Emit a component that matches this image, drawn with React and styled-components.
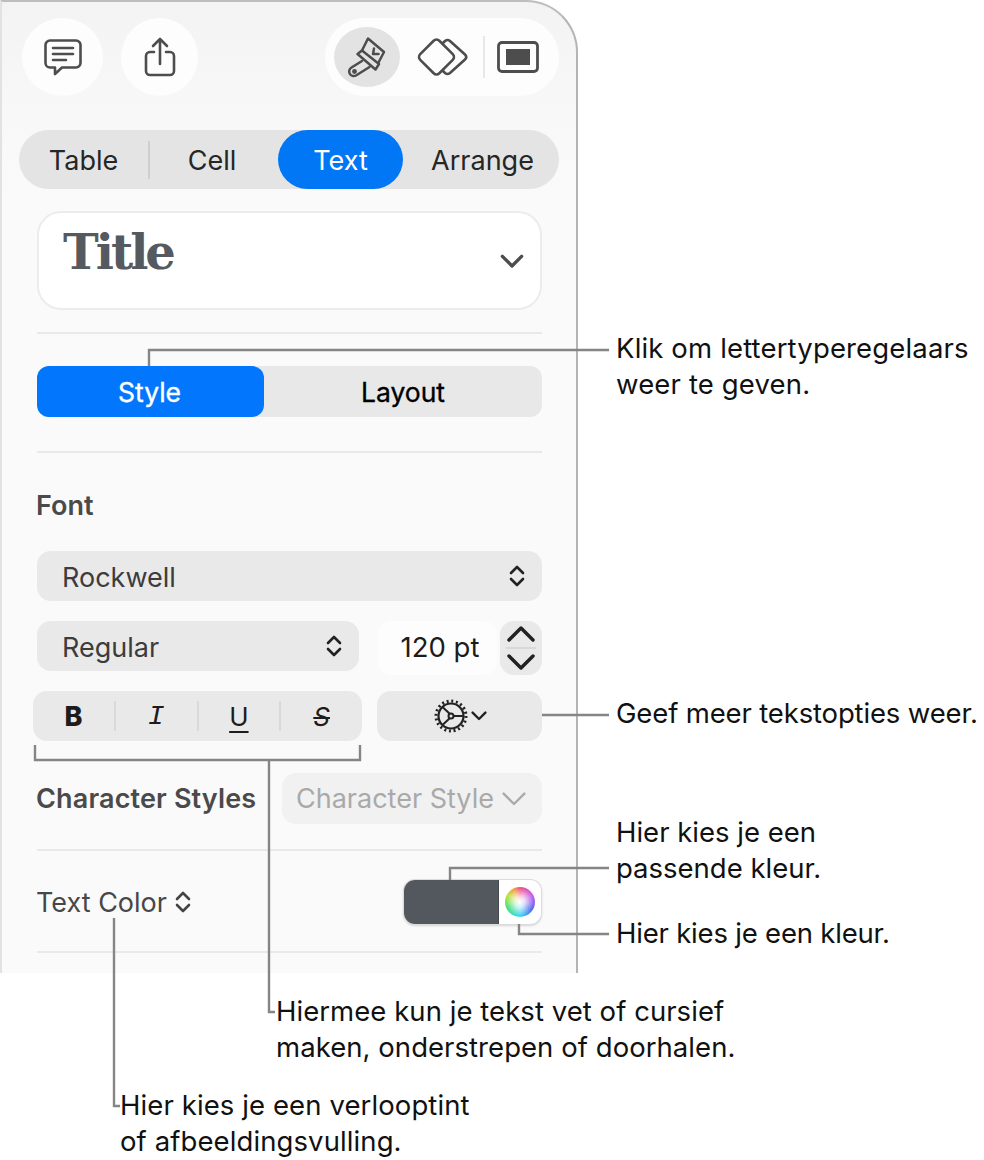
import React from "react";
import styled, { createGlobalStyle } from "styled-components";

const GlobalStyle = createGlobalStyle`
  body {
    margin: 0;
    background: #fff;
    font-family: Inter, "Noto Sans", sans-serif;
  }
`;

const Page = styled.div`
  position: relative;
  width: 984px;
  height: 1160px;
  overflow: hidden;
`;

const Panel = styled.div`
  box-sizing: border-box;
  width: 578px;
  height: 973px;
  padding-top: 16px;
  background: linear-gradient(180deg, #f3f3f3 0, #f8f8f8 110px, #fafafa 200px);
  border-top: 2px solid #bdbdbd;
  border-right: 2px solid #b4b4b4;
  border-left: 2px solid #e2e2e2;
  border-top-right-radius: 52px;
  overflow: hidden;
`;

const Toolbar = styled.div`
  display: flex;
  align-items: center;
  margin: 0 17px 0 20px;
  height: 78px;
`;

const RoundButton = styled.div`
  display: flex;
  align-items: center;
  justify-content: center;
  width: ${(p) => p.$w}px;
  height: 78px;
  margin-right: 18px;
  border-radius: 50%;
  background: #fdfdfd;
`;

const ViewGroup = styled.div`
  display: flex;
  align-items: center;
  margin-left: auto;
  width: 234px;
  height: 78px;
  padding-left: 9px;
  box-sizing: border-box;
  border-radius: 39px;
  background: #fdfdfd;
`;

const ViewActive = styled.div`
  width: 66px;
  height: 60px;
  line-height: 0;
  border-radius: 50%;
  background: #e3e3e3;
`;

const ViewIcon = styled.div`
  display: flex;
  align-items: center;
  justify-content: center;
  width: ${(p) => p.$w}px;
`;

const ViewDivider = styled.div`
  width: 2px;
  height: 42px;
  background: #e8e8e8;
`;

const Tabs = styled.div`
  display: flex;
  align-items: center;
  margin: 34px 17px 0 17px;
  height: 59px;
  border-radius: 30px;
  background: #e4e4e4;
`;

const Tab = styled.div`
  box-sizing: border-box;
  display: flex;
  align-items: center;
  justify-content: center;
  width: ${(p) => p.$w}px;
  height: 59px;
  padding: 2px ${(p) => p.$right || 0}px 0 ${(p) => p.$left || 0}px;
  border-radius: 30px;
  font-size: 27px;
  color: ${(p) => (p.$active ? "#fff" : "#262626")};
  background: ${(p) => (p.$active ? "#0277f5" : "transparent")};
`;

const TabDivider = styled.div`
  width: 2px;
  height: 38px;
  background: #cfcfcf;
`;

const Body = styled.div`
  margin: 22px 34px 0 35px;
`;

const TitleBox = styled.div`
  box-sizing: border-box;
  display: flex;
  justify-content: space-between;
  height: 99px;
  padding: 8px 16px 0 24px;
  border: 2px solid #ececec;
  border-radius: 24px;
  background: #fff;
`;

const TitleText = styled.div`
  font-family: "DejaVu Serif", serif;
  font-weight: 700;
  font-size: 48px;
  letter-spacing: -3px;
  line-height: 62px;
  color: #555a61;
`;

const TitleChevron = styled.div`
  align-self: center;
  margin-top: -6px;
  line-height: 0;
`;

const Divider = styled.div`
  height: 2px;
  margin-top: ${(p) => p.$top}px;
  background: #e9e9e9;
`;

const Segmented = styled.div`
  display: flex;
  height: 51px;
  margin-top: 32px;
  border-radius: 12px;
  background: #e8e8e8;
`;

const Segment = styled.div`
  box-sizing: border-box;
  display: flex;
  align-items: center;
  justify-content: center;
  flex: ${(p) => (p.$active ? "0 0 227px" : "1")};
  padding-right: ${(p) => (p.$active ? 2 : 0)}px;
  border-radius: 12px;
  font-size: 26.5px;
  font-weight: 400;
  -webkit-text-stroke: 0.35px currentColor;
  color: ${(p) => (p.$active ? "#fff" : "#000")};
  background: ${(p) => (p.$active ? "#0277fd" : "transparent")};
`;

const SectionLabel = styled.div`
  margin: 38px 0 0 -1px;
  font-size: 27px;
  font-weight: 600;
  line-height: 30px;
  color: #4a4a4a;
`;

const Select = styled.div`
  box-sizing: border-box;
  display: flex;
  align-items: center;
  justify-content: space-between;
  width: ${(p) => (p.$w ? `${p.$w}px` : "auto")};
  height: 50px;
  margin-top: ${(p) => p.$top || 0}px;
  padding: 0 17px 0 25px;
  border-radius: 14px;
  font-size: 27px;
  color: #3c3c3c;
  background: #e9e9e9;
`;

const SelectText = styled.span`
  padding-top: 2px;
`;

const SizeRow = styled.div`
  display: flex;
  height: 50px;
  margin-top: 20px;
`;

const SizeField = styled.div`
  box-sizing: border-box;
  display: flex;
  align-items: center;
  justify-content: center;
  width: 119px;
  height: 54px;
  margin-left: 19px;
  padding: 0 0 3px 5px;
  border-radius: 14px;
  font-size: 27.5px;
  color: #1c1c1c;
  background: #fdfdfd;
`;

const Stepper = styled.div`
  display: flex;
  flex-direction: column;
  align-items: center;
  justify-content: center;
  gap: 4px;
  width: 42px;
  height: 54px;
  margin-left: 3px;
  border-radius: 14px;
  background: #e9e9e9;
`;

const StepperLine = styled.div`
  width: 30px;
  height: 2px;
  background: #d8d8d8;
`;

const FormatRow = styled.div`
  display: flex;
  justify-content: space-between;
  margin: 20px 0 0 -4px;
`;

const FormatGroup = styled.div`
  display: flex;
  align-items: center;
  width: 329px;
  height: 50px;
  border-radius: 14px;
  background: #e9e9e9;
`;

const FormatButton = styled.div`
  flex: 1;
  text-align: center;
  font-size: ${(p) => p.$size || 26}px;
  color: #1c1c1c;
  font-weight: ${(p) => (p.$bold ? 800 : 400)};
  font-family: ${(p) => (p.$mono ? '"Liberation Mono", monospace' : "inherit")};
  font-style: ${(p) => (p.$italic ? "italic" : "normal")};
  text-decoration: ${(p) => p.$deco || "none"};
  text-decoration-thickness: 2px;
  text-underline-offset: 5px;
`;

const FormatDivider = styled.div`
  width: 2px;
  height: 30px;
  background: #d9d9d9;
`;

const GearButton = styled.div`
  display: flex;
  align-items: center;
  justify-content: center;
  gap: 2px;
  width: 165px;
  height: 50px;
  border-radius: 14px;
  background: #e9e9e9;
`;

const StylesRow = styled.div`
  display: flex;
  align-items: center;
  justify-content: space-between;
  margin-top: 32px;
`;

const StylesLabel = styled.div`
  margin-left: -1px;
  font-size: 27px;
  font-weight: 600;
  letter-spacing: 0.15px;
  white-space: nowrap;
  color: #4a4a4a;
`;

const StyleSelect = styled.div`
  box-sizing: border-box;
  display: flex;
  align-items: center;
  justify-content: space-between;
  width: 260px;
  height: 51px;
  padding: 0 15px 0 14px;
  border-radius: 14px;
  font-size: 27px;
  white-space: nowrap;
  color: #a9a9a9;
  background: #f1f1f1;
`;

const ColorRow = styled.div`
  display: flex;
  align-items: center;
  justify-content: space-between;
  height: 44px;
  margin-top: 29px;
`;

const ColorLabel = styled.div`
  display: flex;
  align-items: center;
  gap: 8px;
  margin-left: -1px;
  font-size: 27px;
  color: #474747;
`;

const ColorWell = styled.div`
  display: flex;
  width: 137px;
  height: 44px;
  margin-right: 1px;
  border-radius: 11px;
  overflow: hidden;
  background: #fff;
  box-shadow: 0 0 0 1px #dcdcdc, 0 1px 3px rgba(0, 0, 0, 0.3);
`;

const ColorSwatch = styled.div`
  width: 94px;
  background: #53575e;
  border-right: 1px solid #474a50;
`;

const WheelCell = styled.div`
  flex: 1;
  display: flex;
  align-items: center;
  justify-content: center;
`;

const Wheel = styled.div`
  width: 30px;
  height: 30px;
  border-radius: 50%;
  background:
    radial-gradient(circle closest-side, #fff 0, rgba(255, 255, 255, 0.75) 35%, rgba(255, 255, 255, 0) 92%),
    conic-gradient(#f2508c, #c85fe6 60deg, #4f6df5 125deg, #3fd8f0 180deg, #45e07a 245deg, #c4e040 300deg, #f5a040 335deg, #f2508c);
`;

const Leaders = styled.svg`
  position: absolute;
  left: 0;
  top: 0;
  pointer-events: none;
`;

const Note = styled.div`
  position: absolute;
  left: ${(p) => p.$x}px;
  top: ${(p) => p.$y}px;
  font-size: 27.5px;
  letter-spacing: ${(p) => p.$ls || 0}px;
  line-height: 35.5px;
  white-space: nowrap;
  color: #111;
`;

const UpDown = ({ color = "#222" }) => (
  <svg width="16" height="24" viewBox="0 0 16 24" fill="none" stroke={color} strokeWidth="2.6" strokeLinecap="round" strokeLinejoin="round">
    <path d="M2 9l6-6 6 6" />
    <path d="M2 15l6 6 6-6" />
  </svg>
);

const CommentIcon = () => (
  <svg width="38" height="37" viewBox="0 0 38 37" fill="none" stroke="#4d4d4d" strokeWidth="2.6" strokeLinecap="round" strokeLinejoin="round">
    <path d="M6 1.5h26a4.5 4.5 0 0 1 4.5 4.5v18a4.5 4.5 0 0 1-4.5 4.5H18l-7 6.5v-6.5H6A4.5 4.5 0 0 1 1.5 24V6A4.5 4.5 0 0 1 6 1.5z" />
    <path d="M9 9h20M9 15h20M9 21h13" />
  </svg>
);

const ShareIcon = () => (
  <svg width="32" height="40" viewBox="0 0 32 40" fill="none" stroke="#4d4d4d" strokeWidth="2.6" strokeLinecap="round" strokeLinejoin="round">
    <path d="M16 2v25M9 9l7-7 7 7" />
    <path d="M10 15H6a4 4 0 0 0-4 4v15a4 4 0 0 0 4 4h20a4 4 0 0 0 4-4V19a4 4 0 0 0-4-4h-4" />
  </svg>
);

const BrushIcon = () => (
  <svg width="66" height="60" viewBox="-0.5 -3 66 60" fill="none" stroke="#4d4d4d" strokeWidth="2.5" strokeLinecap="round" strokeLinejoin="round">
    <path d="M27.500 20.500L33.500 8.500L49.500 22L44 32.500" />
    <path d="M39.500 18.500L38.500 24L44 24" />
    <path d="M23 24l4.500-3.500 17 13.500-3.500 5.500z" />
    <path d="M27.500 31L17 37.500a4.500 4.500 0 0 0 4.500 8L35 37" />
    <circle cx="20" cy="41.500" r="1.200" fill="#4d4d4d" />
  </svg>
);

const DiamondsIcon = () => (
  <svg width="52" height="40" viewBox="0 0 52 40" fill="none" stroke="#4d4d4d" strokeWidth="2.6" strokeLinejoin="round" strokeLinecap="round">
    <rect x="7" y="6.500" width="27" height="27" rx="4" transform="rotate(45 20.500 20)" />
    <path d="M27 6l2-2q2.500-2 5 0l15 13.500q2.500 2.500 0 5L34 36q-2.500 2-5 0l-2-2" />
  </svg>
);

const SlideIcon = () => (
  <svg width="42" height="32" viewBox="0 0 42 32" fill="none">
    <rect x="1.500" y="1.500" width="39" height="29" rx="3.500" stroke="#4d4d4d" strokeWidth="2.8" />
    <rect x="9" y="8" width="24" height="16" fill="#4d4d4d" />
  </svg>
);

const Chevron = ({ size = 24, width = 2.8, color = "#4d4d4d", up = false }) => (
  <svg width={size} height={size * 0.6} viewBox="0 0 20 12" fill="none" stroke={color} strokeWidth={width} strokeLinecap="round" strokeLinejoin="round">
    <path d={up ? "M2 10l8-8 8 8" : "M2 2l8 8 8-8"} />
  </svg>
);

const GearIcon = () => (
  <svg width="36" height="36" viewBox="0 0 36 36" fill="none" stroke="#222">
    <circle cx="18" cy="18" r="12.500" strokeWidth="2.2" />
    <circle cx="18" cy="18" r="15" strokeWidth="3" strokeDasharray="2 2.700" />
    <circle cx="18" cy="18" r="2.500" strokeWidth="2" />
    <path d="M20.500 18H30M16.700 15.800L10 9.500M16.700 20.200L10 26.500" strokeWidth="2" />
  </svg>
);

export default function App() {
  return (
    <Page>
      <GlobalStyle />
      <Panel>
        <Toolbar>
          <RoundButton $w={81}><CommentIcon /></RoundButton>
          <RoundButton $w={77}><ShareIcon /></RoundButton>
          <ViewGroup>
            <ViewActive><BrushIcon /></ViewActive>
            <ViewIcon $w={83}><DiamondsIcon /></ViewIcon>
            <ViewDivider />
            <ViewIcon $w={66}><SlideIcon /></ViewIcon>
          </ViewGroup>
        </Toolbar>

        <Tabs>
          <Tab $w={129}>Table</Tab>
          <TabDivider />
          <Tab $w={128} $right={4}>Cell</Tab>
          <Tab $w={125} $active>Text</Tab>
          <Tab $w={156} $left={3}>Arrange</Tab>
        </Tabs>

        <Body>
          <TitleBox>
            <TitleText>Title</TitleText>
            <TitleChevron><Chevron /></TitleChevron>
          </TitleBox>
          <Divider $top={22} />

          <Segmented>
            <Segment $active>Style</Segment>
            <Segment>Layout</Segment>
          </Segmented>
          <Divider $top={34} />

          <SectionLabel>Font</SectionLabel>
          <Select $top={30}>
            <SelectText>Rockwell</SelectText>
            <UpDown />
          </Select>

          <SizeRow>
            <Select $w={322}>
              <SelectText>Regular</SelectText>
              <UpDown />
            </Select>
            <SizeField>120 pt</SizeField>
            <Stepper>
              <Chevron size={30} width={2.3} color="#222" up />
              <StepperLine />
              <Chevron size={30} width={2.3} color="#222" />
            </Stepper>
          </SizeRow>

          <FormatRow>
            <FormatGroup>
              <FormatButton $bold $size={27}>B</FormatButton>
              <FormatDivider />
              <FormatButton $mono $italic $size={28}>I</FormatButton>
              <FormatDivider />
              <FormatButton $deco="underline">U</FormatButton>
              <FormatDivider />
              <FormatButton $italic $deco="line-through">S</FormatButton>
            </FormatGroup>
            <GearButton>
              <GearIcon />
              <Chevron size={16} width={3} color="#222" />
            </GearButton>
          </FormatRow>

          <StylesRow>
            <StylesLabel>Character Styles</StylesLabel>
            <StyleSelect>
              <span>Character Style</span>
              <Chevron size={26} width={1.8} color="#a9a9a9" />
            </StyleSelect>
          </StylesRow>
          <Divider $top={25} />

          <ColorRow>
            <ColorLabel>
              Text Color
              <UpDown color="#444" />
            </ColorLabel>
            <ColorWell>
              <ColorSwatch />
              <WheelCell><Wheel /></WheelCell>
            </ColorWell>
          </ColorRow>
          <Divider $top={27} />
        </Body>
      </Panel>

      <Leaders width="984" height="1160" viewBox="0 0 984 1160" fill="none" stroke="#858585" strokeWidth="2.4">
        <path d="M149 366V350H609" />
        <path d="M542 715H609" />
        <path d="M450 880V868H609" />
        <path d="M519 924V934H609" />
        <path d="M35 745V760H360V745" />
        <path d="M269 760V1012H275" />
        <path d="M114 918V1106H120" />
      </Leaders>

      <Note $x={616} $y={331} $ls={0.15}>Klik om lettertyperegelaars<br />weer te geven.</Note>
      <Note $x={616} $y={696} $ls={-0.15}>Geef meer tekstopties weer.</Note>
      <Note $x={616} $y={815}>Hier kies je een<br />passende kleur.</Note>
      <Note $x={616} $y={916} $ls={-0.2}>Hier kies je een kleur.</Note>
      <Note $x={276} $y={994} $ls={0.05}>Hiermee kun je tekst vet of cursief<br />maken, onderstrepen of doorhalen.</Note>
      <Note $x={120} $y={1088} $ls={0.1}>Hier kies je een verlooptint<br />of afbeeldingsvulling.</Note>
    </Page>
  );
}
